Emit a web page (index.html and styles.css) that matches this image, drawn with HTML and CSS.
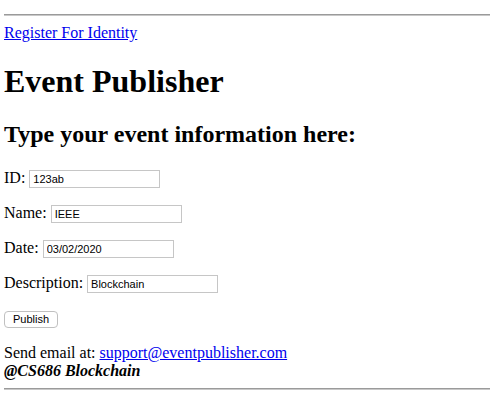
FILE: index.html
```html
<!DOCTYPE html>
<html>
<head>
<meta charset="utf-8">
<title>Event Publisher</title>
<link rel="stylesheet" href="styles.css">
</head>
<body>
<hr class="rule">
<a href="#" class="link">Register For Identity</a>
<h1 class="title">Event Publisher</h1>
<h2 class="subtitle">Type your event information here:</h2>
<form class="form">
  <p class="row">ID: <input class="field" type="text" value="123ab"></p>
  <p class="row">Name: <input class="field" type="text" value="IEEE"></p>
  <p class="row">Date: <input class="field" type="text" value="03/02/2020"></p>
  <p class="row">Description: <input class="field" type="text" value="Blockchain"></p>
  <p class="row"><button class="btn" type="button">Publish</button></p>
</form>
<div class="footer">
  Send email at: <a href="#" class="link">support@eventpublisher.com</a><br>
  <b><i>@CS686 Blockchain</i></b>
</div>
<hr class="rule">
</body>
</html>
```
FILE: styles.css
```css
html, body {
  background: #fff;
}
body {
  margin: 0;
  padding: 6px 1px 0 4px;
  font-family: "Liberation Serif", "Times New Roman", serif;
  font-size: 16px;
  color: #000;
}
.rule {
  margin: 8px 0;
  border: 0;
  height: 0;
  border-top: 1px solid #9a9a9a;
  border-bottom: 1px solid #c8c8c8;
}
.link {
  color: #0000ee;
  text-decoration: underline;
}
.title {
  font-size: 32px;
  font-weight: bold;
  margin: 21px 0;
}
.subtitle {
  font-size: 24px;
  font-weight: bold;
  margin: 20px 0 21px;
}
.form {
  margin: 0;
}
.row {
  margin: 16px 0;
}
.field {
  width: 131px;
  height: 18px;
  box-sizing: border-box;
  border: 1px solid #c6c6c6;
  padding: 1px 3px;
  font-family: "Liberation Sans", Arial, sans-serif;
  font-size: 11px;
  color: #000;
  vertical-align: baseline;
}
.btn {
  width: 54px;
  height: 17px;
  padding: 0;
  font-family: "Liberation Sans", Arial, sans-serif;
  font-size: 11px;
  color: #000;
  background: #fff;
  border: 1px solid #c0c0c0;
  border-radius: 4px;
  line-height: 15px;
}
.footer {
  margin: 15px 0 0;
}
```
